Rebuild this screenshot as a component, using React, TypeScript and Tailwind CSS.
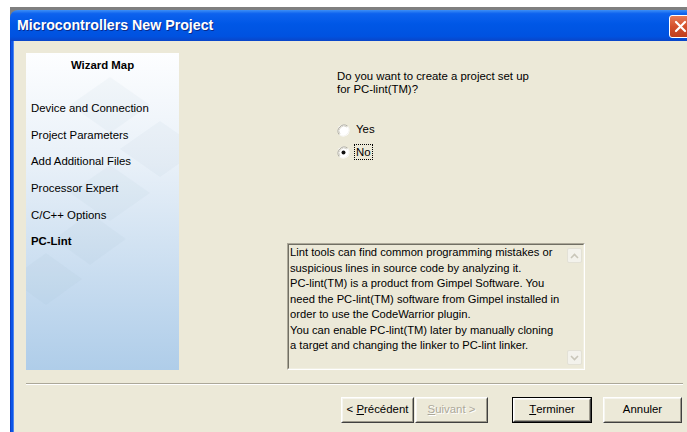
import type { ReactNode } from "react";

const wizardSteps = [
  "Device and Connection",
  "Project Parameters",
  "Add Additional Files",
  "Processor Expert",
  "C/C++ Options",
];

const lintInfo = [
  "Lint tools can find common programming mistakes or",
  "suspicious lines in source code by analyzing it.",
  "PC-lint(TM) is a product from Gimpel Software. You",
  "need the PC-lint(TM) software from Gimpel installed in",
  "order to use the CodeWarrior plugin.",
  "You can enable PC-lint(TM) later by manually cloning",
  "a target and changing the linker to PC-lint linker.",
];

function Radio({ checked }: { checked?: boolean }) {
  return (
    <svg width="13" height="13" viewBox="0 0 13 13" className="shrink-0">
      <circle cx="6.5" cy="6.5" r="6" fill="#ffffff" />
      <path d="M2.3 10.7 A6 6 0 0 1 10.7 2.3" fill="none" stroke="#a9a79c" strokeWidth="1" />
      <path d="M10.7 2.3 A6 6 0 0 1 2.3 10.7" fill="none" stroke="#f4f3ee" strokeWidth="1" />
      <path d="M3 10 A5 5 0 0 1 10 3" fill="none" stroke="#d8d6cc" strokeWidth="1" />
      {checked && <circle cx="6.5" cy="6.5" r="2" fill="#111111" />}
    </svg>
  );
}

function WizButton({
  children,
  width,
  isDefault,
  disabled,
}: {
  children: ReactNode;
  width: string;
  isDefault?: boolean;
  disabled?: boolean;
}) {
  return (
    <div
      className={`${width} h-[26px] ${isDefault ? "border border-black" : ""} shrink-0`}
    >
      <div className="h-full w-full border border-t-white border-l-white border-r-[#404040] border-b-[#404040]">
        <div
          className={`h-full w-full border border-t-[#f6f5ef] border-l-[#f6f5ef] border-r-[#9d9a8c] border-b-[#9d9a8c] bg-[#ECE9D8] flex items-center justify-center text-[11.4px] ${
            disabled ? "text-[#aca899] [text-shadow:1px_1px_0_#ffffff]" : "text-black"
          }`}
        >
          {children}
        </div>
      </div>
    </div>
  );
}

function ScrollArrow({ up }: { up?: boolean }) {
  return (
    <div className="h-[17px] w-[17px] p-[1px]">
      <div className="h-full w-full rounded-[2px] border border-[#e3e1d6] bg-[#f3f2ec] flex items-center justify-center">
        <svg width="9" height="6" viewBox="0 0 9 6">
          <path
            d={up ? "M1 5 L4.5 1.5 L8 5" : "M1 1 L4.5 4.5 L8 1"}
            fill="none"
            stroke="#c9c6b9"
            strokeWidth="1.6"
          />
        </svg>
      </div>
    </div>
  );
}

export default function App() {
  return (
    <div className="w-[687px] h-[432px] overflow-hidden bg-white pt-[7px] pl-[10px] font-['Liberation_Sans',Arial,sans-serif]">
      <div className="h-[425px] bg-[#7f7f7f] pt-[3px] flex flex-col">
        {/* title bar */}
        <div className="h-[31px] shrink-0 rounded-tl-[8px] bg-[linear-gradient(180deg,#3d8ff7_0%,#0d62ee_12%,#0057e6_45%,#0052e0_85%,#0a45c8_100%)] flex items-start">
          <span className="pl-[7px] pt-[7px] text-[14.2px] font-bold text-white leading-[17px] [text-shadow:1px_1px_0_#0a2a8a]">
            Microcontrollers New Project
          </span>
          <div className="ml-auto mt-[5px] mr-[-5px] h-[23px] w-[23px] rounded-[3px] border border-white bg-[linear-gradient(180deg,#e77a57_0%,#d4502c_50%,#c03e1e_100%)] flex items-center justify-center">
            <svg width="13" height="13" viewBox="0 0 13 13">
              <path d="M2 2 L11 11 M11 2 L2 11" stroke="#ffffff" strokeWidth="2.2" strokeLinecap="round" />
            </svg>
          </div>
        </div>

        <div className="flex-1 flex">
          {/* left window frame */}
          <div className="w-[4px] bg-[linear-gradient(90deg,#0a2fb0_0%,#0b55e8_30%,#0b55e8_70%,#7ea4f2_100%)]" />

          <div className="flex-1 bg-[#ECE9D8] flex flex-col">
            <div className="flex h-[317px] mt-[12px] ml-[12px]">
              {/* wizard map */}
              <div className="relative w-[153px] h-full bg-[linear-gradient(180deg,#fdfeff_0%,#e8f0f8_35%,#c9ddf0_70%,#afcde9_100%)] overflow-hidden">
                <svg
                  className="absolute inset-0"
                  width="153"
                  height="317"
                  viewBox="0 0 153 317"
                >
                  <g fill="#8da3b8" fillOpacity="0.06">
                    <path d="M84 24 L124 52 L84 80 L44 52 Z" />
                    <path d="M134 68 L174 96 L134 124 L94 96 Z" />
                    <path d="M84 112 L124 140 L84 168 L44 140 Z" />
                    <path d="M64 160 L100 186 L64 212 L28 186 Z" />
                    <path d="M20 200 L56 226 L20 252 L-16 226 Z" />
                  </g>
                </svg>
                <div className="relative flex flex-col text-[11.4px] text-black">
                  <div className="pt-[5px] h-[31px] text-center font-bold leading-[14px]">
                    Wizard Map
                  </div>
                  <div className="mt-[17px] flex flex-col pl-[5px]">
                    {wizardSteps.map((step) => (
                      <div key={step} className="h-[26.7px] leading-[14px]">
                        {step}
                      </div>
                    ))}
                    <div className="h-[26.7px] leading-[14px] font-bold">PC-Lint</div>
                  </div>
                </div>
              </div>

              {/* page body */}
              <div className="ml-[108px] flex flex-col">
                <div className="pl-[50px] pt-[17px] text-[11.4px] leading-[13px] text-black">
                  <div>Do you want to create a project set up</div>
                  <div>for PC-lint(TM)?</div>
                </div>
                <div className="pl-[50px] mt-[26px] flex flex-col gap-[6px] text-[11.4px] text-black">
                  <div className="h-[16px] flex items-center gap-[5px]">
                    <Radio />
                    <span className="px-[1px]">Yes</span>
                  </div>
                  <div className="h-[16px] flex items-center gap-[4px]">
                    <Radio checked />
                    <span className="px-[1px] border border-dotted border-black leading-[14px]">No</span>
                  </div>
                </div>

                <div className="mt-auto h-[127px] w-[298px] border border-t-[#aca899] border-l-[#aca899] border-r-white border-b-white">
                  <div className="h-full w-full border border-t-[#716f64] border-l-[#716f64] border-r-[#f1efe2] border-b-[#f1efe2] flex">
                    <div className="flex-1 text-[11.2px] leading-[15.5px] text-black pl-[1px] whitespace-nowrap">
                      {lintInfo.map((line) => (
                        <div key={line}>{line}</div>
                      ))}
                    </div>
                    <div className="w-[17px] flex flex-col justify-between bg-[#ECE9D8] py-[2px]">
                      <ScrollArrow up />
                      <ScrollArrow />
                    </div>
                  </div>
                </div>
              </div>
            </div>

            {/* etched separator */}
            <div className="mt-[13px] ml-[12px] mr-[4px] h-[2px] border-t border-t-[#aca899] border-b border-b-white" />

            <div className="mt-[12px] flex ml-[327px]">
              <WizButton width="w-[73px]">
                &lt;&nbsp;<span className="underline">P</span>récédent
              </WizButton>
              <div className="w-[1px]" />
              <WizButton width="w-[73px]" disabled>
                <span className="underline">S</span>uivant &gt;
              </WizButton>
              <div className="w-[24px]" />
              <WizButton width="w-[80px]" isDefault>
                <span className="underline">T</span>erminer
              </WizButton>
              <div className="w-[11px]" />
              <WizButton width="w-[79px]">Annuler</WizButton>
            </div>
          </div>
        </div>
      </div>
    </div>
  );
}
